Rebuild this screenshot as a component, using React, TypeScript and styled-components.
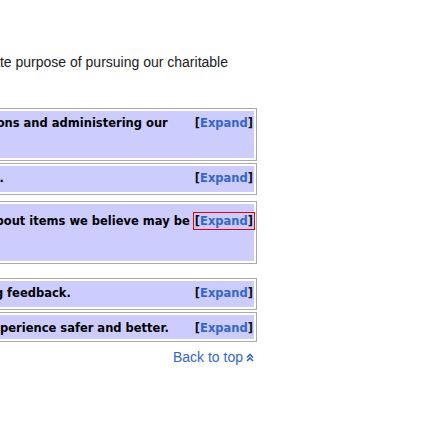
import React from "react";
import styled, { createGlobalStyle } from "styled-components";

const Global = createGlobalStyle`
  html, body { margin: 0; padding: 0; background: #fff; }
  body { font-family: "Liberation Sans", Arial, sans-serif; }
`;

const Page = styled.div`
  width: 448px;
  height: 448px;
  overflow: hidden;
  padding-top: 52px;
  box-sizing: border-box;
`;

const Column = styled.div`
  width: 257px;
  display: flex;
  flex-direction: column;
`;

const Lead = styled.p`
  margin: 0;
  display: flex;
  justify-content: flex-end;
  padding-right: 29px;
  font-size: 14px;
  line-height: 20px;
  color: #202122;
  white-space: nowrap;
`;

const Navbox = styled.div<{ $gap: number }>`
  margin-top: ${(p) => p.$gap}px;
  margin-left: -300px;
  border: 1px solid #aaa;
  padding: 2px;
  background: #fff;
`;

const TitleBar = styled.div<{ $h: number; $pad: number }>`
  height: ${(p) => p.$h}px;
  box-sizing: border-box;
  background: #ccccff;
  display: flex;
  justify-content: flex-end;
  align-items: flex-start;
  padding: ${(p) => p.$pad}px 1px 0 0;
  font-family: "DejaVu Sans", Verdana, sans-serif;
  font-weight: bold;
  font-size: 11.5px;
  line-height: 14px;
  color: #000;
  white-space: nowrap;
`;

const TitleText = styled.span<{ $space: number }>`
  flex-shrink: 0;
  margin-right: ${(p) => p.$space}px;
`;

const Toggle = styled.span<{ $focused?: boolean }>`
  flex-shrink: 0;
  color: #111;
  outline: ${(p) => (p.$focused ? "1px solid #e00" : "none")};
  outline-offset: 1px;
`;

const ToggleLink = styled.a`
  color: #3366cc;
  text-decoration: none;
`;

const Footer = styled.div`
  margin-top: 5px;
  display: flex;
  justify-content: flex-end;
  align-items: center;
  padding-right: 3px;
  height: 20px;
`;

const TopLink = styled.a`
  display: flex;
  align-items: center;
  gap: 3px;
  color: #3366cc;
  font-size: 14px;
  line-height: 20px;
  text-decoration: none;
`;

type Box = { title: string; space: number; h: number; gap: number; pad: number; focused?: boolean };

const boxes: Box[] = [
  { title: "Wikimedia Foundation operations and administering our", space: 27, h: 47, gap: 36, pad: 5 },
  { title: "Terms of Use for our websites.", space: 191, h: 26, gap: 2, pad: 5 },
  { title: "Information about items we believe may be", space: 5, h: 57, gap: 6, pad: 10, focused: true },
  { title: "Giving and receiving feedback.", space: 124, h: 26, gap: 14, pad: 5 },
  { title: "Making your experience safer and better.", space: 26, h: 24, gap: 2, pad: 6 },
];

const UpIcon = () => (
  <svg width="8" height="9" viewBox="0 0 8 9" aria-hidden="true">
    <path d="M1 4.5 L4 1.5 L7 4.5 M1 8 L4 5 L7 8" fill="none" stroke="#3366cc" strokeWidth="1.6" />
  </svg>
);

export default function App() {
  return (
    <>
      <Global />
      <Page>
        <Column>
          <Lead>the ultimate purpose of pursuing our charitable</Lead>
          {boxes.map((b, i) => (
            <Navbox key={i} $gap={b.gap}>
              <TitleBar $h={b.h} $pad={b.pad}>
                <TitleText $space={b.space}>{b.title}</TitleText>
                <Toggle $focused={b.focused}>
                  [<ToggleLink href="#">Expand</ToggleLink>]
                </Toggle>
              </TitleBar>
            </Navbox>
          ))}
          <Footer>
            <TopLink href="#">
              Back to top <UpIcon />
            </TopLink>
          </Footer>
        </Column>
      </Page>
    </>
  );
}
